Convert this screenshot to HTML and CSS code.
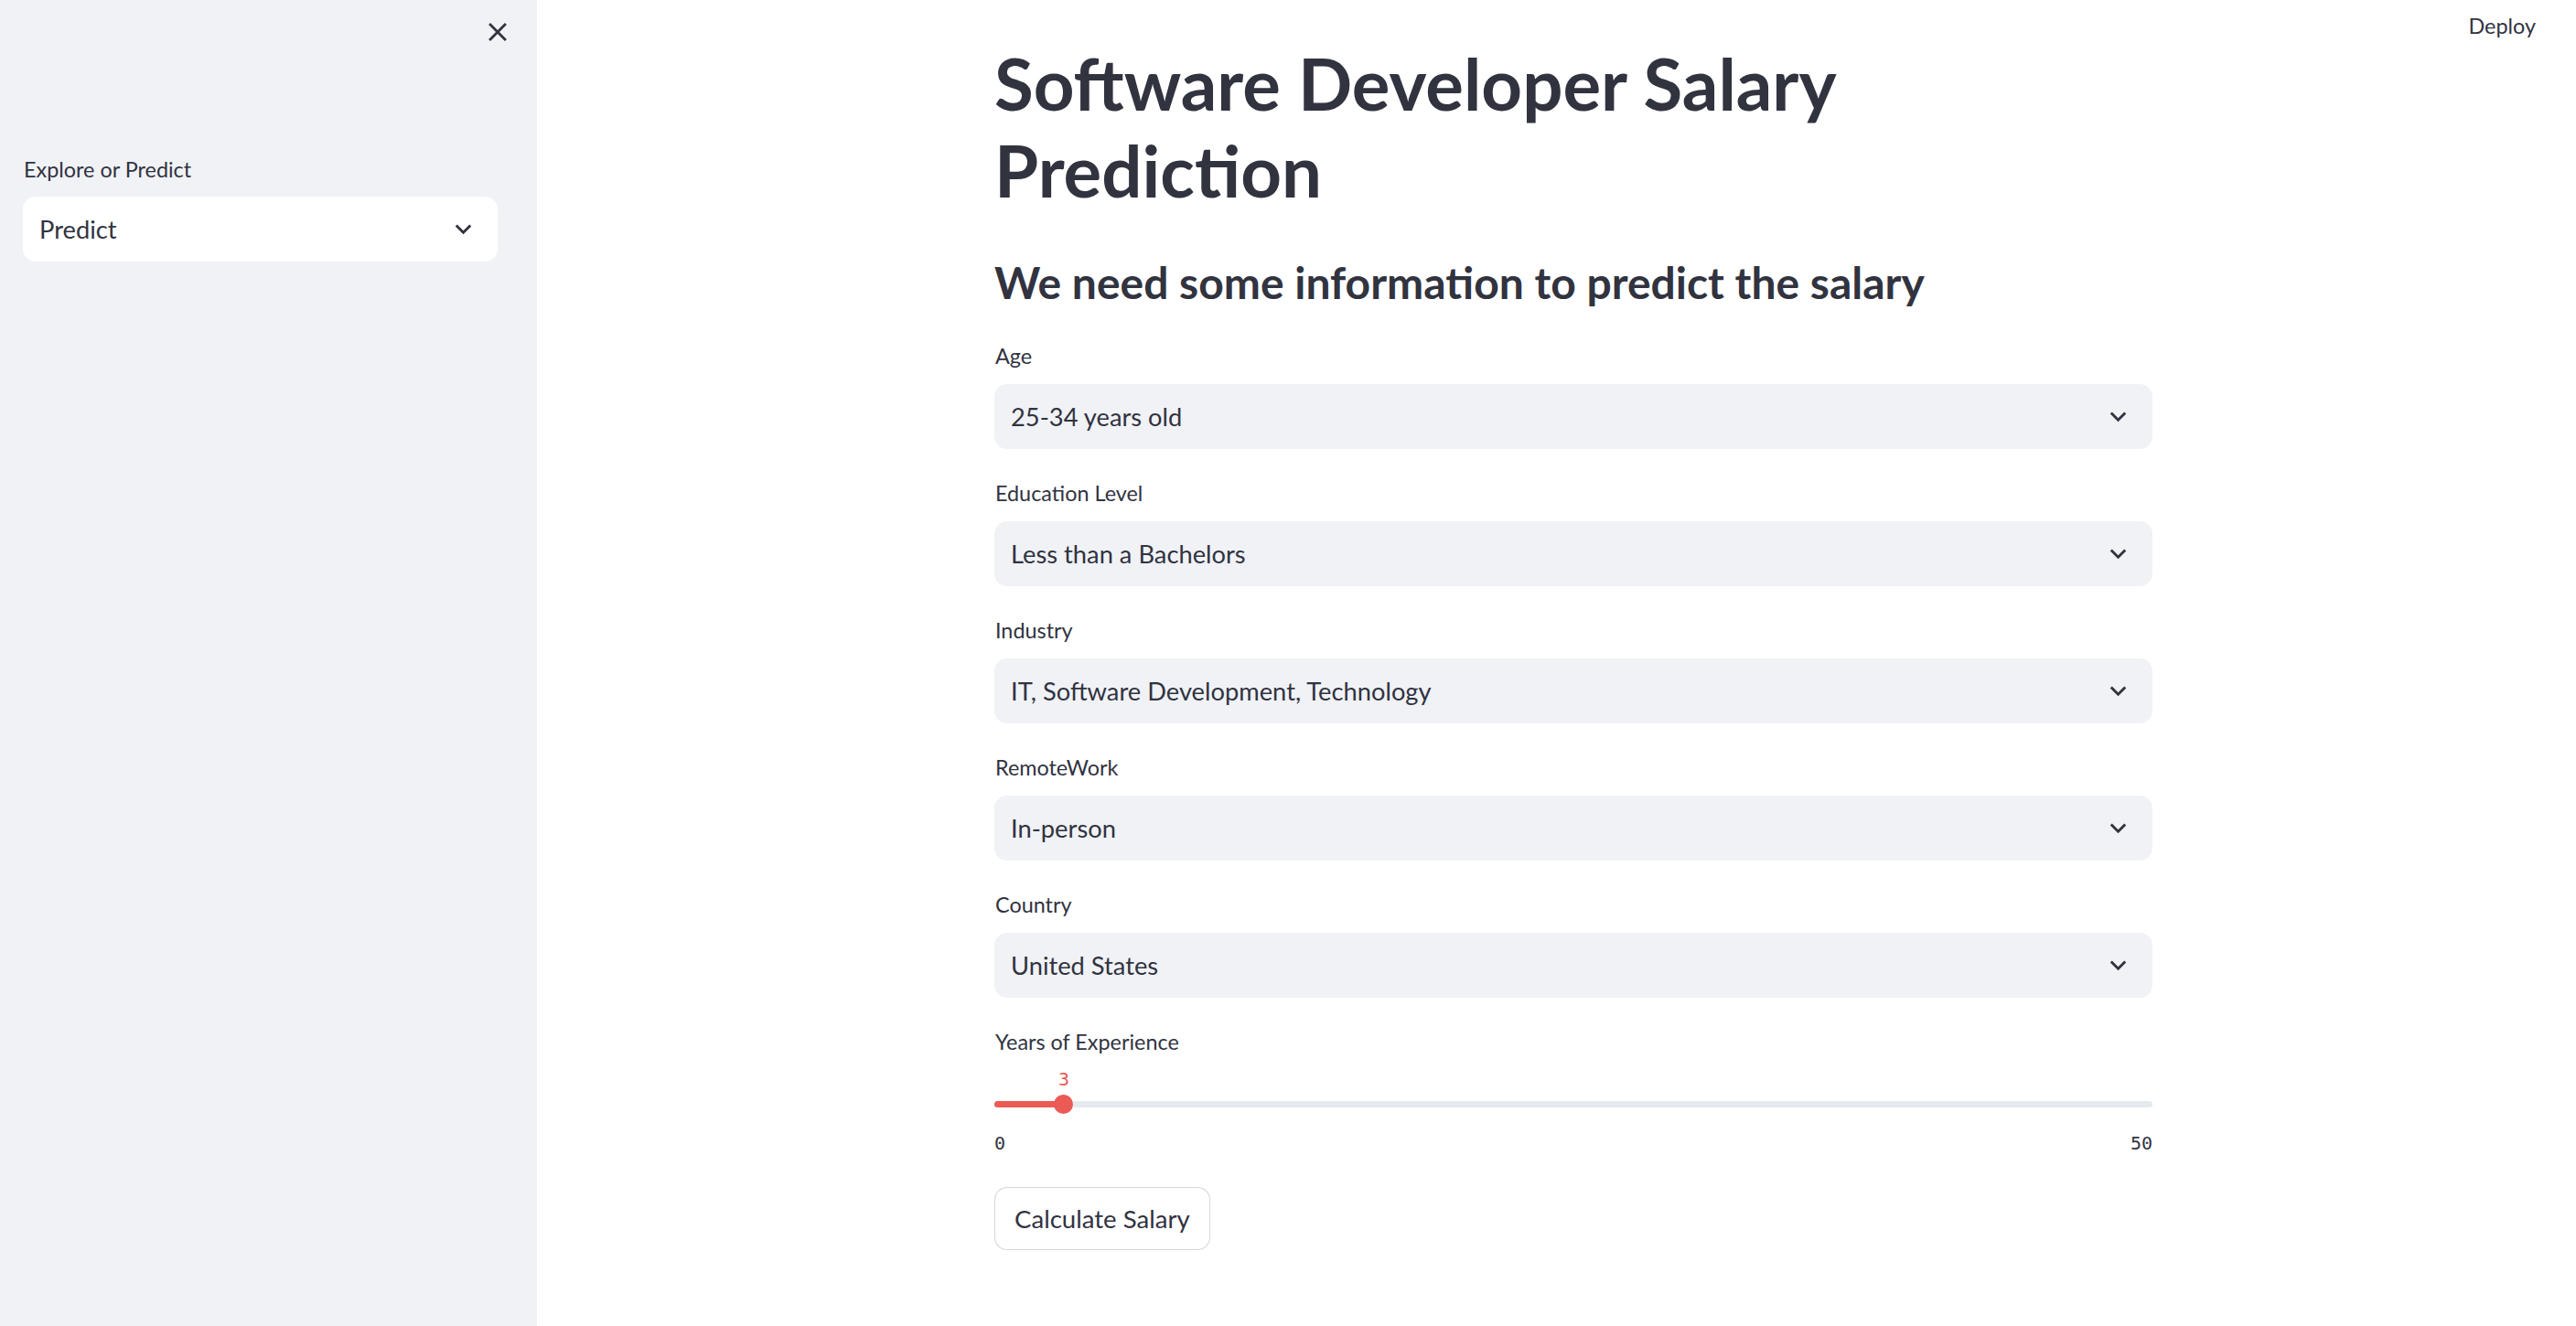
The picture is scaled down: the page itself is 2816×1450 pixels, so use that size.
FILE: index.html
```html
<!DOCTYPE html>
<html lang="en">
<head>
<meta charset="utf-8">
<title>Software Developer Salary Prediction</title>
<link rel="stylesheet" href="styles.css">
</head>
<body>
<div class="app">
  <aside class="sidebar">
    <div class="sidebar-top">
      <button class="close-btn" aria-label="Close sidebar">
        <svg viewBox="0 0 24 24" width="34" height="34"><path d="M19 6.41L17.59 5 12 10.59 6.41 5 5 6.41 10.59 12 5 17.59 6.41 19 12 13.41 17.59 19 19 17.59 13.41 12z" fill="currentColor"/></svg>
      </button>
    </div>
    <div class="field sidebar-field">
      <div class="label">Explore or Predict</div>
      <div class="select select-white"><span>Predict</span><svg class="chev" viewBox="0 0 24 24" width="35" height="35"><path d="M16.59 8.59L12 13.17 7.41 8.59 6 10l6 6 6-6z" fill="currentColor"/></svg></div>
    </div>
  </aside>
  <main class="main">
    <header class="topbar"><span class="deploy">Deploy</span></header>
    <div class="block">
      <h1 class="title">Software Developer Salary<br>Prediction</h1>
      <h3 class="subtitle">We need some information to predict the salary</h3>
      <div class="form">
        <div class="field">
          <div class="label">Age</div>
          <div class="select"><span>25-34 years old</span><svg class="chev" viewBox="0 0 24 24" width="35" height="35"><path d="M16.59 8.59L12 13.17 7.41 8.59 6 10l6 6 6-6z" fill="currentColor"/></svg></div>
        </div>
        <div class="field">
          <div class="label">Education Level</div>
          <div class="select"><span>Less than a Bachelors</span><svg class="chev" viewBox="0 0 24 24" width="35" height="35"><path d="M16.59 8.59L12 13.17 7.41 8.59 6 10l6 6 6-6z" fill="currentColor"/></svg></div>
        </div>
        <div class="field">
          <div class="label">Industry</div>
          <div class="select"><span>IT, Software Development, Technology</span><svg class="chev" viewBox="0 0 24 24" width="35" height="35"><path d="M16.59 8.59L12 13.17 7.41 8.59 6 10l6 6 6-6z" fill="currentColor"/></svg></div>
        </div>
        <div class="field">
          <div class="label">RemoteWork</div>
          <div class="select"><span>In-person</span><svg class="chev" viewBox="0 0 24 24" width="35" height="35"><path d="M16.59 8.59L12 13.17 7.41 8.59 6 10l6 6 6-6z" fill="currentColor"/></svg></div>
        </div>
        <div class="field">
          <div class="label">Country</div>
          <div class="select"><span>United States</span><svg class="chev" viewBox="0 0 24 24" width="35" height="35"><path d="M16.59 8.59L12 13.17 7.41 8.59 6 10l6 6 6-6z" fill="currentColor"/></svg></div>
        </div>
        <div class="field">
          <div class="label">Years of Experience</div>
          <div class="slider">
            <div class="track">
              <div class="track-fill" style="width:6%"></div>
              <div class="thumb" style="left:6%"><span class="thumb-value">3</span></div>
            </div>
          </div>
          <div class="ticks"><span>0</span><span>50</span></div>
        </div>
      </div>
      <button class="btn">Calculate Salary</button>
    </div>
  </main>
</div>
</body>
</html>
```
FILE: styles.css
```css
* { box-sizing: border-box; }
html, body { margin: 0; height: 100%; }
body {
  font-family: Lato, "Noto Sans", sans-serif;
  color: #31333f;
  background: #ffffff;
  overflow: hidden;
}
.app { display: flex; height: 100vh; }

.sidebar {
  width: 587px;
  flex: none;
  background: #f0f2f6;
  padding: 0 43px 0 25px;
  display: flex;
  flex-direction: column;
}
.sidebar-top {
  display: flex;
  justify-content: flex-end;
  margin-right: -17px;
  padding-top: 18px;
}
.close-btn {
  width: 34px; height: 34px;
  padding: 0; border: 0; background: none;
  color: #31333f;
  display: flex;
}
.sidebar-field { margin-top: 116px; }
.sidebar-field .label { margin-bottom: 12px; }

.field { display: flex; flex-direction: column; }
.label {
  font-size: 23.4px;
  line-height: 35px;
  margin-bottom: 13px;
  padding-left: 1px;
}
.select {
  height: 71px;
  background: #f0f2f6;
  border-radius: 14px;
  display: flex;
  align-items: center;
  justify-content: space-between;
  padding: 0 20px 0 18px;
  font-size: 27.3px;
}
.select-white { background: #ffffff; }
.chev { flex: none; color: #31333f; }

.main { flex: 1; position: relative; }
.topbar {
  position: absolute;
  top: 0; right: 0;
  display: flex;
  padding: 11px 44px 0 0;
}
.deploy { font-size: 23.4px; line-height: 35px; }

.block { width: 1266px; margin-left: 500px; padding-top: 44px; }
.title {
  margin: 0;
  font-size: 78px;
  line-height: 95px;
  font-weight: 700;
}
.subtitle {
  margin: 45px 0 0;
  font-size: 48px;
  line-height: 60px;
  font-weight: 700;
}
.form { margin-top: 33px; display: flex; flex-direction: column; gap: 31px; }

.slider { margin-top: 27px; padding: 7px 0; }
.track {
  position: relative;
  height: 7px;
  border-radius: 4px;
  background: #e6e9ef;
}
.track-fill {
  height: 100%;
  border-radius: 4px;
  background: #eb5a55;
}
.thumb {
  position: absolute;
  top: 50%;
  width: 21px; height: 21px;
  margin: -10.5px 0 0 -10.5px;
  border-radius: 50%;
  background: #eb5a55;
}
.thumb-value {
  position: absolute;
  bottom: 100%;
  left: 50%;
  transform: translateX(-50%);
  margin-bottom: 5px;
  font-family: "DejaVu Sans Mono", monospace;
  font-size: 20px;
  line-height: 24px;
  color: #eb5a55;
}
.ticks {
  display: flex;
  justify-content: space-between;
  margin-top: 20px;
  font-family: "DejaVu Sans Mono", monospace;
  font-size: 20px;
  line-height: 24px;
}
.btn {
  margin-top: 36px;
  height: 69px;
  padding: 0 21px;
  border: 1px solid rgba(49, 51, 63, 0.2);
  border-radius: 14px;
  background: #ffffff;
  color: #31333f;
  font-family: inherit;
  font-size: 27.6px;
}
```
